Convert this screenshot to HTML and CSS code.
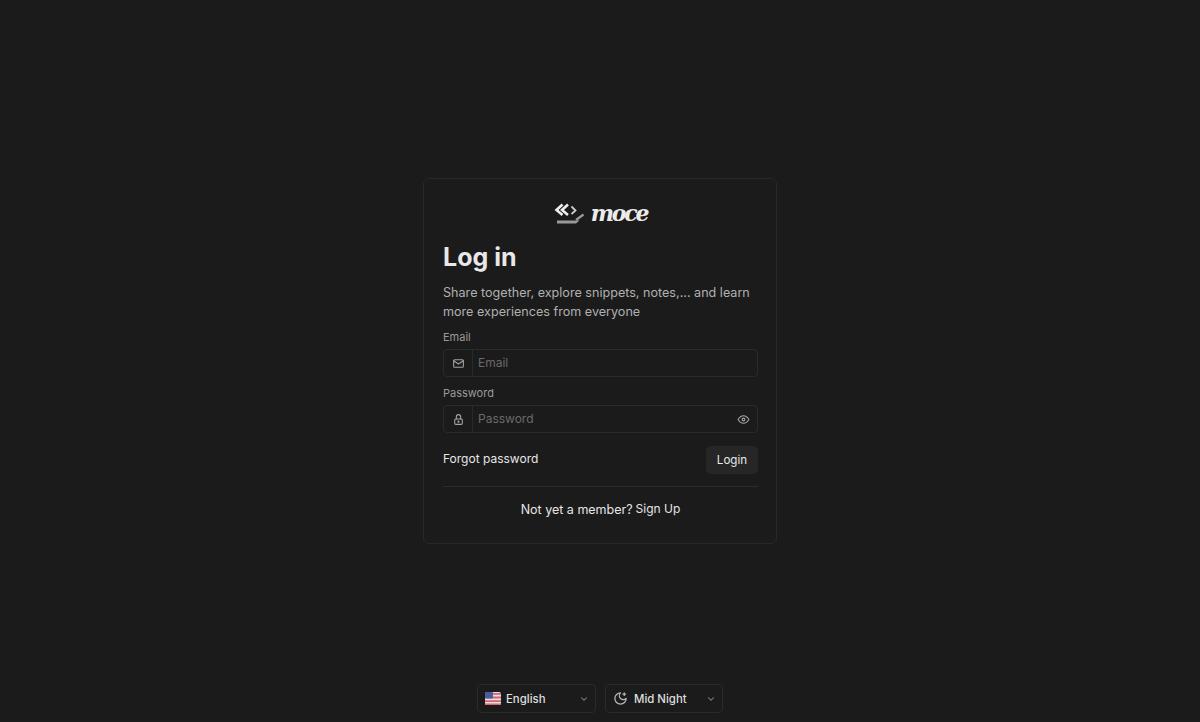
FILE: index.html
```html
<!DOCTYPE html>
<html lang="en">
<head>
<meta charset="utf-8">
<title>Log in</title>
<link rel="stylesheet" href="styles.css">
</head>
<body>
<div class="page">
  <div class="spacer"></div>
  <main class="card">
    <div class="logo">
      <svg class="logo-mark" width="31" height="22" viewBox="0 0 31 22" fill="none">
        <path d="M8.500 1.500 2.500 7 8.500 12" stroke="#eee" stroke-width="2.600"/>
        <path d="M14 1.500 8 7 14 12" stroke="#eee" stroke-width="2.600"/>
        <path d="M17.500 3.500 21.500 7.500 17.500 11" stroke="#ccc" stroke-width="1.800"/>
        <path d="M22 17 29.500 11.500" stroke="#999" stroke-width="2.200"/>
        <path d="M3 20.500H22L25.500 17.500H3Z" fill="#999"/>
      </svg>
      <span class="logo-text">moce</span>
    </div>
    <h1 class="title">Log in</h1>
    <p class="lead">Share together, explore snippets, notes,... and learn more experiences from everyone</p>
    <form class="form">
      <div class="field">
        <label class="label">Email</label>
        <div class="input-group">
          <span class="addon">
            <svg width="13" height="13" viewBox="0 0 24 24" fill="none" stroke="#a3a3a3" stroke-width="2" stroke-linecap="round" stroke-linejoin="round"><rect x="3" y="5" width="18" height="14" rx="2"/><path d="m3 7 9 6 9-6"/></svg>
          </span>
          <span class="placeholder">Email</span>
        </div>
      </div>
      <div class="field">
        <label class="label">Password</label>
        <div class="input-group">
          <span class="addon">
            <svg width="13" height="13" viewBox="0 0 24 24" fill="none" stroke="#a3a3a3" stroke-width="2" stroke-linecap="round" stroke-linejoin="round"><rect x="5" y="11" width="14" height="10" rx="2"/><circle cx="12" cy="16" r="1"/><path d="M8 11V7a4 4 0 0 1 8 0v4"/></svg>
          </span>
          <span class="placeholder">Password</span>
          <svg class="eye" width="13" height="13" viewBox="0 0 24 24" fill="none" stroke="#a3a3a3" stroke-width="2" stroke-linecap="round" stroke-linejoin="round"><circle cx="12" cy="12" r="2.500"/><path d="M22 12c-2.700 4.700-6 7-10 7s-7.300-2.300-10-7c2.700-4.700 6-7 10-7s7.300 2.300 10 7"/></svg>
        </div>
      </div>
      <div class="actions">
        <a class="forgot">Forgot password</a>
        <button class="login" type="button">Login</button>
      </div>
    </form>
    <div class="signup"><span>Not yet a member?</span> <a class="signup-link">Sign Up</a></div>
  </main>
  <footer class="footer">
    <div class="select select-lang">
      <svg class="flag" width="16" height="13" viewBox="0 0 16 13">
        <rect width="16" height="13" rx="2" fill="#e8dfe0"/>
        <path d="M0 1h16v1.800H0zM0 4.600h16v1.800H0zM0 8.200h16V10H0zM0 11.500h16V13H0z" fill="#cf6670"/>
        <rect width="8" height="6.500" rx="1" fill="#4b5c99"/>
      </svg>
      <span class="select-text">English</span>
      <svg class="chev" width="10" height="10" viewBox="0 0 24 24" fill="none" stroke="#8a8a8a" stroke-width="2.500" stroke-linecap="round" stroke-linejoin="round"><path d="m6 9 6 6 6-6"/></svg>
    </div>
    <div class="select select-theme">
      <svg class="moon" width="15" height="15" viewBox="0 0 24 24" fill="none" stroke="#b8b8b8" stroke-width="2" stroke-linecap="round" stroke-linejoin="round"><path d="M12 3a6 6 0 0 0 9 9 9 9 0 1 1-9-9Z"/><path d="M18 3v4M16 5h4"/></svg>
      <span class="select-text">Mid Night</span>
      <svg class="chev" width="10" height="10" viewBox="0 0 24 24" fill="none" stroke="#8a8a8a" stroke-width="2.500" stroke-linecap="round" stroke-linejoin="round"><path d="m6 9 6 6 6-6"/></svg>
    </div>
  </footer>
</div>
</body>
</html>
```
FILE: styles.css
```css
* { box-sizing: border-box; }
html, body { margin: 0; height: 100%; }
body {
  background: #1b1b1b;
  color: #e5e5e5;
  font-family: Inter, "Liberation Sans", sans-serif;
  overflow: hidden;
}
.page {
  height: 722px;
  display: grid;
  grid-template-rows: 1fr 366px 1fr;
  justify-items: center;
}
.card {
  width: 354px;
  height: 366px;
  border: 1px solid #282828;
  border-radius: 6px;
  padding: 19px 18px 0 19px;
  display: flex;
  flex-direction: column;
}
.logo {
  display: flex;
  justify-content: center;
  align-items: center;
  gap: 6px;
  height: 30px;
}
.logo-mark { margin-top: 2px; }
.logo-text {
  font-family: "DejaVu Serif", serif;
  font-style: italic;
  font-weight: 700;
  font-size: 22px;
  line-height: 24px;
  color: #ececec;
  letter-spacing: -2.200px;
}
.title {
  margin: 11px 0 0;
  font-size: 25px;
  line-height: 36px;
  font-weight: 700;
  color: #e8e8e8;
}
.lead {
  margin: 8px 0 0;
  font-size: 12.600px;
  line-height: 19px;
  color: #b0b0b0;
}
.form { display: flex; flex-direction: column; }
.field { margin-top: 8px; }
.label {
  display: block;
  font-size: 11px;
  line-height: 16px;
  color: #9a9a9a;
}
.input-group {
  margin-top: 4px;
  height: 28px;
  display: flex;
  align-items: center;
  border: 1px solid #2a2a2a;
  border-radius: 4px;
}
.addon {
  width: 29px;
  height: 100%;
  flex: none;
  display: flex;
  align-items: center;
  justify-content: center;
  border-right: 1px solid #2a2a2a;
}
.placeholder {
  flex: 1;
  padding-left: 5px;
  padding-bottom: 2px;
  font-size: 12px;
  color: #6a6a6a;
}
.eye { margin-right: 7px; }
.actions {
  margin-top: 13px;
  display: flex;
  justify-content: space-between;
  align-items: flex-start;
}
.forgot {
  font-size: 12px;
  line-height: 26px;
  color: #e6e6e6;
}
.login {
  width: 52px;
  height: 28px;
  border: 0;
  border-radius: 5px;
  background: #262626;
  color: #e6e6e6;
  font-family: inherit;
  font-size: 11.600px;
  padding: 0;
}
.signup {
  margin-top: 12px;
  padding-top: 13px;
  border-top: 1px solid #2c2c2c;
  display: flex;
  justify-content: center;
  gap: 3px;
  font-size: 12.500px;
  line-height: 20px;
  color: #e6e6e6;
}
.signup-link { font-size: 12px; position: relative; top: -1px; }
.footer {
  align-self: end;
  padding-bottom: 9px;
  display: flex;
  gap: 9px;
}
.select {
  height: 29px;
  border: 1px solid #2a2a2a;
  border-radius: 4px;
  display: flex;
  align-items: center;
  font-size: 11.400px;
  font-weight: 500;
  color: #dedede;
}
.select-lang { width: 119px; padding: 0 7px; }
.select-theme { width: 118px; padding: 0 7px; }
.flag { flex: none; margin-right: 5px; }
.moon { flex: none; margin-right: 6px; }
.select-text { flex: 1; }
.chev { flex: none; margin-right: -1px; }
```
